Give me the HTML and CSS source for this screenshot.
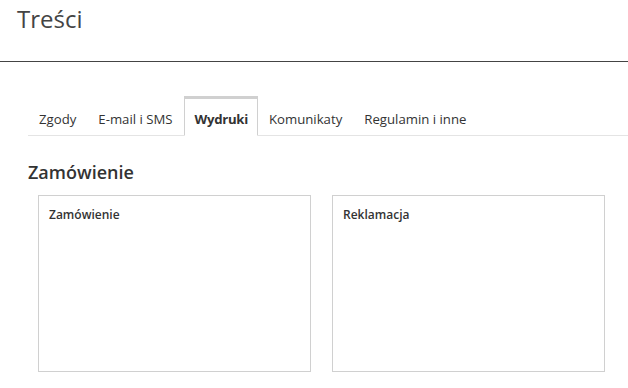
FILE: index.html
```html
<!DOCTYPE html>
<html lang="pl">
<head>
  <meta charset="UTF-8" />
  <meta name="viewport" content="width=device-width, initial-scale=1.0"/>
  <title>Treści</title>
  <link rel="stylesheet" href="styles.css">
</head>
<body>
  <div class="page-header">
    <h1>Treści</h1>
  </div>
  <div class="content">
    <ul class="tabs">
      <li>Zgody</li>
      <li>E-mail i SMS</li>
      <li class="active">Wydruki</li>
      <li>Komunikaty</li>
      <li>Regulamin i inne</li>
    </ul>
    <h2 class="section-title">Zamówienie</h2>
    <div class="cards">
      <div class="card">
        <h3>Zamówienie</h3>
      </div>
      <div class="card">
        <h3>Reklamacja</h3>
      </div>
    </div>
  </div>
</body>
</html>
```

FILE: styles.css
```css
* {
  box-sizing: border-box;
}
body {
  margin: 0;
  font-family: 'Open Sans', 'Noto Sans', sans-serif;
  background-color: #fff;
  color: #333;
}
.page-header {
  height: 62px;
  border-bottom: 1px solid #444;
  padding: 0 17px;
}
.page-header h1 {
  margin: 0;
  padding-top: 1px;
  font-size: 24px;
  font-weight: 400;
  color: #444;
  line-height: 36px;
}
.content {
  padding: 34px 23px 0 28px;
}
.tabs {
  display: flex;
  list-style: none;
  margin: 0 -23px 0 0;
  padding: 0;
  border-bottom: 1px solid #e4e4e4;
}
.tabs li {
  padding: 0 10px;
  height: 40px;
  line-height: 41px;
  font-size: 13.2px;
  color: #333;
  border: 1px solid transparent;
  border-top-width: 3px;
  margin-bottom: -1px;
}
.tabs li.active {
  border-color: #d0d0d0;
  border-bottom-color: #fff;
  background-color: #fff;
  font-weight: 700;
  letter-spacing: -0.3px;
  padding: 0 9px 0 10px;
}
.section-title {
  margin: 24px 0 0;
  font-size: 18px;
  font-weight: 600;
  color: #333;
  line-height: 24px;
}
.cards {
  display: flex;
  gap: 21px;
  padding-left: 10px;
  margin-top: 11px;
}
.card {
  width: 273px;
  height: 177px;
  border: 1px solid #d0d0d0;
  padding: 10px 10px;
}
.card h3 {
  margin: 0;
  font-size: 12px;
  font-weight: 600;
  color: #333;
  line-height: 18px;
}
```
